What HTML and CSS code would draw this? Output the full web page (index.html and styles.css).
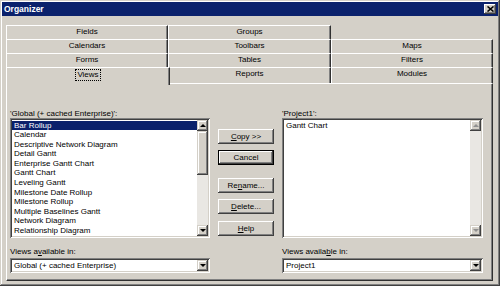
FILE: index.html
```html
<!DOCTYPE html>
<html>
<head>
<meta charset="utf-8">
<link rel="stylesheet" href="styles.css">
</head>
<body>
<div class="window">
  <div class="titlebar">
    <span class="title">Organizer</span>
    <span class="close"><svg width="7" height="6" viewBox="0 0 7 6"><path d="M0.5 0.5 L6.5 5.5 M6.5 0.5 L0.5 5.5" stroke="#000" stroke-width="1.6" fill="none"/></svg></span>
  </div>
  <div class="content">
    <div class="tabs">
      <div class="tab">Fields</div>
      <div class="tab">Groups</div>
      <div class="tab-gap"></div>
      <div class="tab">Calendars</div>
      <div class="tab">Toolbars</div>
      <div class="tab">Maps</div>
      <div class="tab">Forms</div>
      <div class="tab">Tables</div>
      <div class="tab">Filters</div>
      <div class="tab sel"><span class="focus">Views</span></div>
      <div class="tab">Reports</div>
      <div class="tab">Modules</div>
    </div>
    <div class="panel">
      <div class="col">
        <div class="label">'Global (+ cached Enterprise)':</div>
        <div class="listbox">
          <ul class="items">
            <li class="selected">Bar Rollup</li>
            <li>Calendar</li>
            <li>Descriptive Network Diagram</li>
            <li>Detail Gantt</li>
            <li>Enterprise Gantt Chart</li>
            <li>Gantt Chart</li>
            <li>Leveling Gantt</li>
            <li>Milestone Date Rollup</li>
            <li>Milestone Rollup</li>
            <li>Multiple Baselines Gantt</li>
            <li>Network Diagram</li>
            <li>Relationship Diagram</li>
          </ul>
          <div class="vscroll">
            <div class="arrow up"></div>
            <div class="thumb"></div>
            <div class="track"></div>
            <div class="arrow down"></div>
          </div>
        </div>
        <div class="label lower">Views a<u>v</u>ailable in:</div>
        <div class="combo">
          <span class="combo-text">Global (+ cached Enterprise)</span>
          <span class="arrow down"></span>
        </div>
      </div>
      <div class="buttons">
        <div class="btn copy"><u>C</u>opy &gt;&gt;</div>
        <div class="btn default cancel">Cancel</div>
        <div class="btn rename">Re<u>n</u>ame...</div>
        <div class="btn delete"><u>D</u>elete...</div>
        <div class="btn help"><u>H</u>elp</div>
      </div>
      <div class="col right">
        <div class="label">'Project1':</div>
        <div class="listbox">
          <ul class="items">
            <li>Gantt Chart</li>
          </ul>
          <div class="vscroll disabled">
            <div class="arrow up"></div>
            <div class="track"></div>
            <div class="arrow down"></div>
          </div>
        </div>
        <div class="label lower">Views availa<u>b</u>le in:</div>
        <div class="combo">
          <span class="combo-text">Project1</span>
          <span class="arrow down"></span>
        </div>
      </div>
    </div>
  </div>
</div>
</body>
</html>
```
FILE: styles.css
```css
html, body {
  margin: 0;
  padding: 0;
  background: #d4d0c8;
}
body {
  font-family: "Liberation Sans", Arial, sans-serif;
  font-size: 8px;
  color: #000;
}
.window {
  width: 500px;
  height: 286px;
  box-sizing: border-box;
  padding: 2px;
  background: #d4d0c8;
  box-shadow: inset -1px -1px #404040, inset 1px 1px #d4d0c8, inset -2px -2px #808080, inset 2px 2px #fff;
  display: flex;
  flex-direction: column;
}
.titlebar {
  height: 14px;
  background: #0a216c;
  display: flex;
  align-items: center;
  justify-content: space-between;
  padding: 0 2px 0 2px;
}
.title {
  color: #fff;
  font-weight: bold;
  font-size: 8.5px;
}
.close {
  width: 12px;
  height: 10px;
  background: #d4d0c8;
  box-shadow: inset -1px -1px #404040, inset 1px 1px #fff, inset -2px -2px #808080;
  display: flex;
  align-items: center;
  justify-content: center;
}
.content {
  flex: 1;
  display: flex;
  flex-direction: column;
  padding: 9px 5px 3px 4px;
}
.tabs {
  display: grid;
  grid-template-columns: 162px 163px 162px;
  grid-template-rows: 14px 14px 14px 16px;
}
.tab {
  box-sizing: border-box;
  border-top: 1px solid #fff;
  border-left: 1px solid #fff;
  border-right: 1px solid #303030;
  box-shadow: inset -1px 0 #808080;
  text-align: center;
  line-height: 12px;
  background: #d4d0c8;
}
.tab.sel {
  position: relative;
  z-index: 1;
  height: 18px;
  margin-right: -2px;
  line-height: 13px;
}
.focus {
  display: inline-block;
  padding: 0 1px;
  line-height: 10px;
  outline: 1px dotted #000;
  outline-offset: 0;
}
.panel {
  flex: 1;
  display: flex;
  border: 1px solid;
  border-color: #fff #303030 #303030 #fff;
  box-shadow: inset -1px -1px #808080;
  padding: 25px 9px 0 3px;
}
.col {
  width: 200px;
  display: flex;
  flex-direction: column;
}
.col.right {
  width: 201px;
}
.label {
  height: 9px;
  line-height: 9px;
  white-space: nowrap;
}
.label.lower {
  margin-top: 9px;
}
.listbox {
  height: 120px;
  box-sizing: border-box;
  padding: 2px;
  background: #fff;
  box-shadow: inset 1px 1px #808080, inset -1px -1px #fff, inset 2px 2px #404040, inset -2px -2px #d4d0c8;
  display: flex;
}
.items {
  list-style: none;
  margin: 0;
  padding: 0.5px 0 0 0;
  flex: 1;
  overflow: hidden;
}
.items li {
  height: 9.6px;
  line-height: 9.6px;
  padding-left: 2px;
  white-space: nowrap;
}
.items li.selected {
  background: #0a216c;
  color: #fff;
}
.vscroll {
  width: 11px;
  display: flex;
  flex-direction: column;
}
.arrow {
  width: 11px;
  height: 11px;
  box-sizing: border-box;
  background: #d4d0c8;
  box-shadow: inset -1px -1px #404040, inset 1px 1px #d4d0c8, inset -2px -2px #808080, inset 2px 2px #fff;
  display: flex;
  align-items: center;
  justify-content: center;
  flex: none;
}
.arrow::before {
  content: "";
  width: 0;
  height: 0;
  border-left: 3px solid transparent;
  border-right: 3px solid transparent;
}
.arrow.up::before {
  border-bottom: 3px solid #000;
}
.arrow.down::before {
  border-top: 3px solid #000;
}
.disabled .arrow.up::before {
  border-bottom-color: #909090;
}
.disabled .arrow.down::before {
  border-top-color: #909090;
}
.thumb {
  height: 44px;
  flex: none;
  background: #d4d0c8;
  box-shadow: inset -1px -1px #404040, inset 1px 1px #d4d0c8, inset -2px -2px #808080, inset 2px 2px #fff;
}
.track {
  flex: 1;
  background: #e9e7e3;
}
.combo {
  margin-top: 2px;
  height: 15px;
  box-sizing: border-box;
  padding: 2px;
  background: #fff;
  box-shadow: inset 1px 1px #808080, inset -1px -1px #fff, inset 2px 2px #404040, inset -2px -2px #d4d0c8;
  display: flex;
  align-items: center;
}
.combo-text {
  flex: 1;
  padding-left: 2px;
  white-space: nowrap;
}
.buttons {
  width: 56px;
  margin: 0 8px;
  display: flex;
  flex-direction: column;
}
.btn {
  height: 15px;
  box-sizing: border-box;
  line-height: 15px;
  text-align: center;
  background: #d4d0c8;
  box-shadow: inset -1px -1px #404040, inset 1px 1px #fff, inset -2px -2px #808080, inset 2px 2px #d4d0c8;
  white-space: nowrap;
}
.btn.default {
  border: 1px solid #000;
  line-height: 13px;
}
.btn.copy { margin-top: 20px; }
.btn.cancel { margin-top: 6px; }
.btn.rename { margin-top: 13px; }
.btn.delete { margin-top: 6px; }
.btn.help { margin-top: 7px; }
```
